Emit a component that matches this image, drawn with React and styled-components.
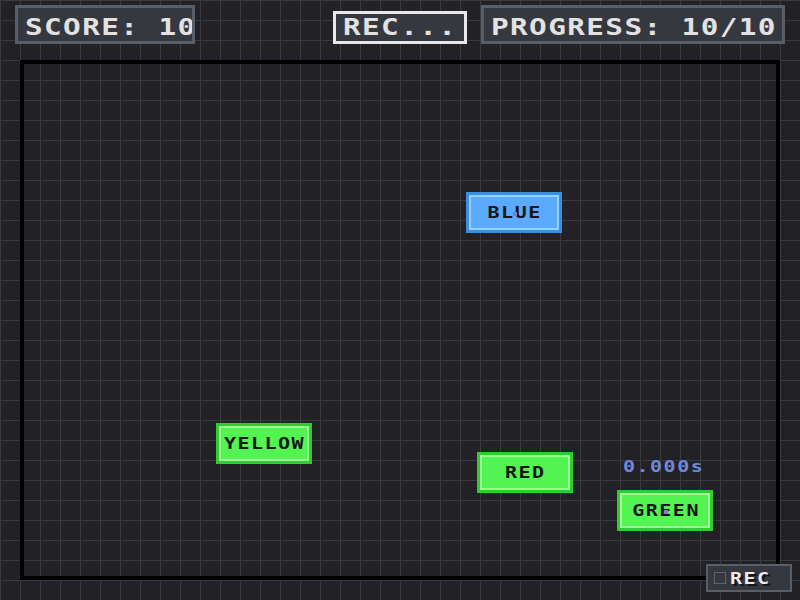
import React from 'react';
import styled, { createGlobalStyle } from 'styled-components';

const GlobalStyle = createGlobalStyle`
    html, body {
        margin: 0;
        padding: 0;
        width: 800px;
        height: 600px;
        overflow: hidden;
    }
    body {
        background-color: #222226;
        background-image:
            linear-gradient(to right, #3a3b41 1px, transparent 1px),
            linear-gradient(to bottom, #3a3b41 1px, transparent 1px);
        background-size: 20px 20px;
        font-family: "DejaVu Sans Mono", "Liberation Mono", monospace;
        font-weight: bold;
    }
`;

const targets = [
    { label: 'BLUE', color: 'blue', x: 466, y: 192, marked: true },
    { label: 'YELLOW', color: 'green', x: 216, y: 423 },
    { label: 'RED', color: 'green', x: 477, y: 452 },
    { label: 'GREEN', color: 'green', x: 617, y: 490, marked: true },
];

const palette = {
    blue: { outer: '#3a8fe2', inner: '#92d2ff', fill: '#5aabff' },
    green: { outer: '#2fcd2f', inner: '#a3f59a', fill: '#52f452' },
};

function App() {
    return (
        <>
            <GlobalStyle />
            <Screen>
                <TopBar>
                    <Stat $width={180}><Wide>SCORE: 10</Wide></Stat>
                    <Right>
                        <Recording><Wide>REC...</Wide></Recording>
                        <Stat $width={304}><Wide>PROGRESS: 10/10</Wide></Stat>
                    </Right>
                </TopBar>
                <Arena>
                    {targets.map(t => (
                        <Target
                            key={t.label}
                            $color={t.color}
                            $marked={t.marked}
                            style={{ left: t.x - 24, top: t.y - 64 }}
                        >
                            <Label>{t.label}</Label>
                        </Target>
                    ))}
                    <Timer>0.000s</Timer>
                </Arena>
                <RecButton>
                    <Check />
                    <Label>REC</Label>
                </RecButton>
            </Screen>
        </>
    );
}

const Screen = styled.div`
    position: relative;
    width: 800px;
    height: 600px;
`;

const TopBar = styled.div`
    display: flex;
    justify-content: space-between;
    align-items: flex-end;
    padding: 5px 15px 0;
    height: 39px;
`;

const Right = styled.div`
    display: flex;
    align-items: flex-end;
    gap: 14px;
`;

const Stat = styled.div`
    box-sizing: border-box;
    width: ${p => p.$width}px;
    height: 39px;
    border: 3px solid #5a5e67;
    background: #363840;
    color: #e2e2e2;
    font-size: 23.5px;
    line-height: 33px;
    padding: 3px 0 0 7px;
    white-space: pre;
    overflow: hidden;
`;

const Recording = styled(Stat)`
    width: 134px;
    height: 33px;
    border-color: #e8e8e8;
    line-height: 27px;
    padding-top: 0;
`;

// pixel-font look: widen the mono glyphs
const Wide = styled.span`
    display: inline-block;
    transform: scaleX(1.25);
    transform-origin: left center;
    letter-spacing: 1.1px;
`;

const Label = styled.span`
    display: inline-block;
    transform: scaleX(1.25);
    letter-spacing: 1.2px;
    margin-right: -1.2px;
`;

const Arena = styled.div`
    position: relative;
    box-sizing: border-box;
    margin: 16px 20px 0;
    height: 520px;
    border: 4px solid #000;
`;

const Target = styled.div`
    position: absolute;
    box-sizing: border-box;
    width: 96px;
    height: 41px;
    display: flex;
    align-items: center;
    justify-content: center;
    background: ${p => palette[p.$color].fill};
    border: 3px solid ${p => palette[p.$color].outer};
    box-shadow: inset 0 0 0 2px ${p => palette[p.$color].inner};
    color: #161616;
    font-size: 16px;
    white-space: nowrap;
    &::after {
        content: '';
        display: ${p => (p.$marked ? 'block' : 'none')};
        position: absolute;
        left: 44px;
        top: 17px;
        width: 4px;
        height: 4px;
        background: #7b7bd8;
    }
`;

const Timer = styled.div`
    position: absolute;
    left: 599px;
    top: 393px;
    color: #7088da;
    font-size: 16px;
    letter-spacing: 1.2px;
    transform: scaleX(1.25);
    transform-origin: left center;
`;

const RecButton = styled.div`
    position: absolute;
    left: 706px;
    top: 564px;
    box-sizing: border-box;
    width: 86px;
    height: 28px;
    display: flex;
    align-items: center;
    gap: 8px;
    padding-left: 6px;
    border: 2px solid #5a5e67;
    background: #363840;
    color: #ececec;
    font-size: 16px;
    text-shadow: 2px 2px 0 #15151a;
`;

const Check = styled.div`
    width: 10px;
    height: 10px;
    border: 1px solid #5f626b;
`;

export default App;
